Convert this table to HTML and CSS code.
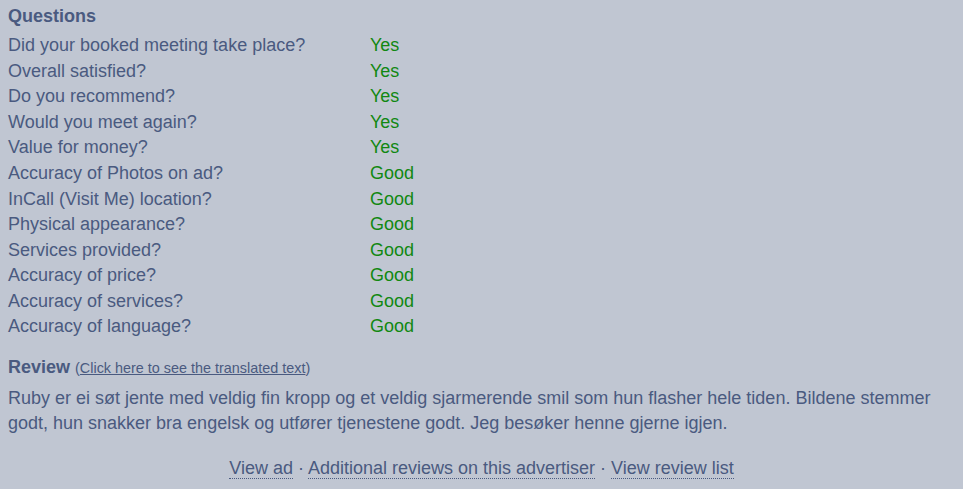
FILE: index.html
```html
<!DOCTYPE html>
<html>
<head>
<meta charset="utf-8">
<link rel="stylesheet" href="styles.css">
</head>
<body>
<h3 class="heading">Questions</h3>
<table class="qa">
<tr><td class="q">Did your booked meeting take place?</td><td class="a">Yes</td></tr>
<tr><td class="q">Overall satisfied?</td><td class="a">Yes</td></tr>
<tr><td class="q">Do you recommend?</td><td class="a">Yes</td></tr>
<tr><td class="q">Would you meet again?</td><td class="a">Yes</td></tr>
<tr><td class="q">Value for money?</td><td class="a">Yes</td></tr>
<tr><td class="q">Accuracy of Photos on ad?</td><td class="a">Good</td></tr>
<tr><td class="q">InCall (Visit Me) location?</td><td class="a">Good</td></tr>
<tr><td class="q">Physical appearance?</td><td class="a">Good</td></tr>
<tr><td class="q">Services provided?</td><td class="a">Good</td></tr>
<tr><td class="q">Accuracy of price?</td><td class="a">Good</td></tr>
<tr><td class="q">Accuracy of services?</td><td class="a">Good</td></tr>
<tr><td class="q">Accuracy of language?</td><td class="a">Good</td></tr>
</table>
<h3 class="heading review-head">Review <span class="trans">(<a href="#">Click here to see the translated text</a>)</span></h3>
<p class="review">Ruby er ei søt jente med veldig fin kropp og et veldig sjarmerende smil som hun flasher hele tiden. Bildene stemmer godt, hun snakker bra engelsk og utfører tjenestene godt. Jeg besøker henne gjerne igjen.</p>
<div class="links"><a href="#">View ad</a> · <a href="#">Additional reviews on this advertiser</a> · <a href="#">View review list</a></div>
</body>
</html>
```
FILE: styles.css
```css
html, body {
  background: #c0c6d2;
}
body {
  margin: 0;
  padding: 0 8px;
  font-family: "Liberation Sans", Arial, sans-serif;
  font-size: 18px;
  color: #4a5a80;
}
.heading {
  margin: 0;
  padding-top: 6px;
  font-size: 18px;
  line-height: 21px;
  font-weight: bold;
}
.qa {
  border-collapse: collapse;
  margin-top: 6px;
}
.qa td {
  padding: 0;
  height: 25.55px;
  line-height: 21px;
  vertical-align: middle;
}
.q {
  width: 362px;
}
.a {
  color: #118811;
}
.review-head {
  padding-top: 17px;
}
.trans {
  font-weight: normal;
  font-size: 14.4px;
}
.trans a {
  color: #4a5a80;
  text-decoration: underline;
}
.review {
  margin: 7px 0 0;
  line-height: 25px;
}
.links {
  text-align: center;
  margin-top: 21px;
  line-height: 22px;
}
.links a {
  color: #4a5a80;
  text-decoration: none;
  border-bottom: 1px dotted #4a5a80;
}
```
